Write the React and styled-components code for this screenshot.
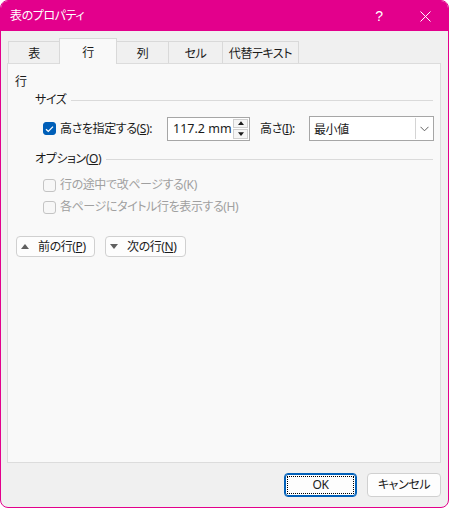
import React from "react";
import styled, { createGlobalStyle } from "styled-components";

const GlobalStyle = createGlobalStyle`
  html, body { margin: 0; padding: 0; background: #ffffff; }
  body {
    font-family: "Noto Sans", "Noto Sans CJK JP", sans-serif;
    font-size: 12px;
    color: #1b1b1b;
    font-feature-settings: "palt" 1;
    letter-spacing: -0.4px;
  }
  * { box-sizing: border-box; }
`;

const Window = styled.div`
  width: 449px;
  height: 508px;
  border: 1px solid #e3008c;
  border-radius: 8px;
  overflow: hidden;
  background: #f0f0f0;
  display: flex;
  flex-direction: column;
`;

const TitleBar = styled.div`
  height: 30px;
  flex: none;
  background: #e3008c;
  color: #ffffff;
  display: flex;
  align-items: center;
  padding-left: 9px;
  line-height: 16px;
`;

const Title = styled.span`
  flex: 1;
  font-size: 12px;
`;

const TitleButton = styled.span`
  width: 46px;
  height: 30px;
  display: flex;
  align-items: center;
  justify-content: center;
  color: #ffffff;
  font-family: "Liberation Sans", sans-serif;
  font-size: 14px;
`;

const Body = styled.div`
  padding: 8px 7px 0 6px;
  flex: none;
`;

const TabStrip = styled.div`
  display: flex;
  align-items: flex-end;
  height: 24px;
  padding-left: 1px;
  position: relative;
  z-index: 1;
`;

const Tab = styled.div`
  width: ${(p) => p.$w}px;
  height: ${(p) => (p.$active ? 26 : 22)}px;
  margin-left: ${(p) => (p.$first ? 0 : -1)}px;
  margin-bottom: ${(p) => (p.$active ? -1 : 0)}px;
  border: 1px solid #d9d9d9;
  border-bottom: none;
  background: ${(p) => (p.$active ? "#f9f9f9" : "#f0f0f0")};
  position: relative;
  z-index: ${(p) => (p.$active ? 2 : 1)};
  display: flex;
  align-items: center;
  justify-content: center;
  padding-top: ${(p) => (p.$active ? 0 : 1)}px;
  font-family: "Noto Sans CJK JP", sans-serif;
  font-size: 12px;
  line-height: 16px;
`;

const Panel = styled.div`
  height: 400px;
  background: #f9f9f9;
  border: 1px solid #dcdcdc;
  padding: 9px 7px 0 7px;
  display: flex;
  flex-direction: column;
  line-height: 16px;
`;

const GroupTitle = styled.div`
  font-family: "Noto Sans CJK JP", sans-serif;
  height: 16px;
`;

const SectionHeader = styled.div`
  display: flex;
  align-items: center;
  gap: 5px;
  margin-left: 20px;
  margin-top: ${(p) => p.$top}px;
  height: 16px;
  font-family: "Noto Sans", "Noto Sans CJK JP", sans-serif;
`;

const Rule = styled.div`
  flex: 1;
  height: 1px;
  background: #dadada;
`;

const SizeRow = styled.div`
  display: flex;
  align-items: center;
  margin-top: 8px;
  margin-left: 28px;
  height: 25px;
`;

const CheckBox = styled.span`
  width: 13px;
  height: 13px;
  flex: none;
  border-radius: 3px;
  display: inline-flex;
  align-items: center;
  justify-content: center;
  background: ${(p) => (p.$checked ? "#005fb8" : "#f7f7f7")};
  border: 1px solid ${(p) => (p.$checked ? "#005fb8" : "#c4c4c4")};
`;

const Label = styled.span`
  font-family: "Noto Sans", "Noto Sans CJK JP", sans-serif;
  color: ${(p) => (p.$disabled ? "#a0a0a0" : "#1b1b1b")};
  width: ${(p) => (p.$w ? `${p.$w}px` : "auto")};
  margin-left: ${(p) => p.$ml || 0}px;
  flex: none;
  white-space: nowrap;
`;

const NumberBox = styled.div`
  width: 83px;
  height: 24px;
  border: 1px solid #a6a6a6;
  background: #ffffff;
  display: flex;
  align-items: center;
  padding-left: 5px;
  padding-right: 1px;
  flex: none;
`;

const NumberText = styled.span`
  flex: 1;
  font-family: "Noto Sans", sans-serif;
  font-size: 12.5px;
  letter-spacing: 0;
`;

const Spinner = styled.div`
  width: 15px;
  height: 20px;
  display: flex;
  flex-direction: column;
  gap: 1px;
`;

const SpinHalf = styled.div`
  flex: 1;
  border: 1px solid #cfcfcf;
  background: #f5f5f5;
  display: flex;
  align-items: center;
  justify-content: center;
`;

const SelectBox = styled.div`
  width: 125px;
  height: 25px;
  border: 1px solid #a6a6a6;
  background: #ffffff;
  display: flex;
  align-items: center;
  margin-left: 10px;
  flex: none;
`;

const SelectText = styled.span`
  flex: 1;
  padding-left: 4px;
  font-family: "Noto Sans CJK JP", sans-serif;
`;

const DropButton = styled.div`
  width: 17px;
  height: 21px;
  margin-right: 1px;
  border-left: 1px solid #d4d4d4;
  display: flex;
  align-items: center;
  justify-content: center;
`;

const OptionRow = styled.div`
  display: flex;
  align-items: center;
  gap: 4px;
  margin-left: 28px;
  margin-top: ${(p) => p.$top}px;
  height: 16px;
`;

const NavRow = styled.div`
  display: flex;
  gap: 10px;
  margin-top: 21px;
  margin-left: 1px;
`;

const NavButton = styled.div`
  width: ${(p) => p.$w}px;
  height: 21px;
  border: 1px solid #d0d0d0;
  border-radius: 4px;
  background: #fdfdfd;
  display: flex;
  align-items: center;
  padding-left: 4px;
  gap: 9px;
  font-family: "Noto Sans", "Noto Sans CJK JP", sans-serif;
`;

const Footer = styled.div`
  display: flex;
  justify-content: flex-end;
  gap: 10px;
  padding: 10px 7px 0 0;
`;

const DialogButton = styled.div`
  width: ${(p) => p.$w}px;
  height: 24px;
  border-radius: 4px;
  background: #fdfdfd;
  border: 1px solid ${(p) => (p.$default ? "#005fb8" : "#d0d0d0")};
  box-shadow: ${(p) => (p.$default ? "inset 0 0 0 1px #005fb8" : "none")};
  display: flex;
  align-items: center;
  justify-content: center;
  position: relative;
  font-family: "Noto Sans", "Noto Sans CJK JP", sans-serif;
  line-height: 16px;
`;

const FocusRing = styled.span`
  position: absolute;
  inset: 2px;
  border: 1px dotted #000000;
`;

const Check = () => (
  <svg width="9" height="8" viewBox="0 0 9 8">
    <path d="M1 4.2 L3.3 6.4 L8 1.6" fill="none" stroke="#ffffff" strokeWidth="1.3" />
  </svg>
);

const Arrow = ({ up, size = 7, color = "#1b1b1b" }) => (
  <svg width={size} height={Math.ceil(size / 2) + 1} viewBox="0 0 8 5">
    <path d={up ? "M0 5 L4 0 L8 5 Z" : "M0 0 L8 0 L4 5 Z"} fill={color} />
  </svg>
);

const Chevron = () => (
  <svg width="9" height="6" viewBox="0 0 9 6">
    <path d="M0.5 0.8 L4.5 4.8 L8.5 0.8" fill="none" stroke="#606060" strokeWidth="1" />
  </svg>
);

const CloseIcon = () => (
  <svg width="11" height="11" viewBox="0 0 11 11">
    <path d="M0.5 0.5 L10.5 10.5 M10.5 0.5 L0.5 10.5" stroke="#ffffff" strokeWidth="1" />
  </svg>
);

const tabs = [
  { label: "表", w: 52 },
  { label: "行", w: 58, active: true },
  { label: "列", w: 53 },
  { label: "セル", w: 55 },
  { label: "代替テキスト", w: 77 },
];

export default function App() {
  return (
    <>
      <GlobalStyle />
      <Window>
        <TitleBar>
          <Title>表のプロパティ</Title>
          <TitleButton>?</TitleButton>
          <TitleButton>
            <CloseIcon />
          </TitleButton>
        </TitleBar>
        <Body>
          <TabStrip>
            {tabs.map((t, i) => (
              <Tab key={t.label} $w={t.w} $active={t.active} $first={i === 0}>
                {t.label}
              </Tab>
            ))}
          </TabStrip>
          <Panel>
            <GroupTitle>行</GroupTitle>
            <SectionHeader $top={3}>
              <span>サイズ</span>
              <Rule />
            </SectionHeader>
            <SizeRow>
              <CheckBox $checked>
                <Check />
              </CheckBox>
              <Label $w={107} $ml={4}>
                高さを指定する(<u>S</u>):
              </Label>
              <NumberBox>
                <NumberText>117.2 mm</NumberText>
                <Spinner>
                  <SpinHalf>
                    <Arrow up size={6} />
                  </SpinHalf>
                  <SpinHalf>
                    <Arrow size={6} />
                  </SpinHalf>
                </Spinner>
              </NumberBox>
              <Label $ml={10} $w={39}>
                高さ(<u>I</u>):
              </Label>
              <SelectBox>
                <SelectText>最小値</SelectText>
                <DropButton>
                  <Chevron />
                </DropButton>
              </SelectBox>
            </SizeRow>
            <SectionHeader $top={10}>
              <span>
                オプション(<u>O</u>)
              </span>
              <Rule />
            </SectionHeader>
            <OptionRow $top={10}>
              <CheckBox />
              <Label $disabled>行の途中で改ページする(K)</Label>
            </OptionRow>
            <OptionRow $top={6}>
              <CheckBox />
              <Label $disabled>各ページにタイトル行を表示する(H)</Label>
            </OptionRow>
            <NavRow>
              <NavButton $w={79}>
                <Arrow up size={8} color="#606060" />
                <span>
                  前の行(<u>P</u>)
                </span>
              </NavButton>
              <NavButton $w={81}>
                <Arrow size={8} color="#606060" />
                <span>
                  次の行(<u>N</u>)
                </span>
              </NavButton>
            </NavRow>
          </Panel>
        </Body>
        <Footer>
          <DialogButton $w={73} $default>
            OK
            <FocusRing />
          </DialogButton>
          <DialogButton $w={74}>キャンセル</DialogButton>
        </Footer>
      </Window>
    </>
  );
}
